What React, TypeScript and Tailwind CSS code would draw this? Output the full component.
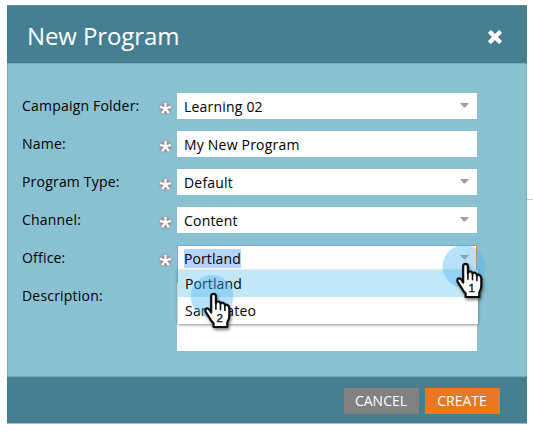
import React from "react";

const font = "font-['Open_Sans',sans-serif]";

function Asterisk() {
  return (
    <svg width="19" height="19" viewBox="-9.5 -9.5 19 19" className="overflow-visible">
      <circle r="5" fill="#c03a44" opacity="0.6" style={{ filter: "blur(1.7px)" }} />
      <path d="M0 0V-5.4M0 0L5.3-1.7M0 0L3.3 4.6M0 0L-3.3 4.6M0 0L-5.3-1.7" stroke="#fff" strokeWidth="2.3" />
    </svg>
  );
}

function Arrow({ active }: { active: boolean }) {
  return (
    <svg width="9" height="5" viewBox="0 0 9 5" className={`shrink-0 ${active ? "mt-[9px] mr-[7px]" : "mt-2.5 mr-2"}`}>
      <path d="M0 0H9L5.2 4.6H3.8Z" fill="#a0a0a0" />
    </svg>
  );
}

function Pointer({ n }: { n: string }) {
  return (
    <svg width="50" height="62" viewBox="0 0 50 62" className="overflow-visible">
      <circle cx="24" cy="26.5" r="21.4" fill="#4cb4f6" opacity="0.4" />
      <g style={{ filter: "drop-shadow(1px 2px 1.5px rgba(0,0,0,.5))" }}>
        <path
          d="M23.2 42.5V26.2Q23.2 23.8 25.5 23.8T27.9 26.2V33.2Q28.4 31.3 30.3 31.5Q32.4 31.7 32.5 33.8Q33.3 32.3 35 32.8Q36.8 33.3 36.9 35.4Q38 34.2 39.7 35.2Q41.3 36.2 41.3 38.5V46Q41.3 49 39.3 52.3V57H25.6V53.3Q23.2 51.5 21.5 47.8L17.8 42Q16.7 39.5 18.3 38.5Q20 37.7 21.6 40Z"
          fill="#fff" stroke="#0d0d0d" strokeWidth="2.2" strokeLinejoin="round"
        />
        <path d="M27.9 32V39.3M32.5 33.8V39.8M36.9 35.5V40.5" stroke="#0d0d0d" strokeWidth="1.6" fill="none" strokeLinecap="round" />
      </g>
      <text x="31.6" y="51.5" textAnchor="middle" fontSize="11.5" fill="#222" stroke="#222" strokeWidth=".4" className="tracking-normal font-['Liberation_Sans',sans-serif]">{n}</text>
    </svg>
  );
}

function Row({ label, value, arrow = true, active = false }: { label: string; value: string; arrow?: boolean; active?: boolean }) {
  return (
    <div className="flex h-[26px]">
      <div className="w-[134px] pt-[3px] leading-5">{label}</div>
      <div className="w-[21px] pt-[6px]"><Asterisk /></div>
      <div className={`flex h-[26px] w-[300px] justify-between bg-white ${active ? "border border-[#e58a35] pl-1.5" : "pl-[7px]"}`}>
        <span className={active ? "mt-[3px] h-[19px] bg-[#b3d4fb] leading-5 tracking-[0.1px]" : "pt-1 leading-5"}>{value}</span>
        {arrow && <Arrow active={active} />}
      </div>
    </div>
  );
}

export default function App() {
  return (
    <div className={`relative h-[433px] w-[533px] overflow-hidden bg-white pt-[5px] pl-[7px] text-[14px] tracking-[0.2px] text-black ${font}`}>
      <div className="flex h-[419px] w-[520px] flex-col bg-[#89c1d2]">
        <header className="flex h-[58px] items-center justify-between border-t border-[#70858b] bg-[#467f91] pr-[25px] pl-5">
          <h1 className="pt-[3px] text-[24px] leading-8 tracking-[-0.1px] text-white">New Program</h1>
          <svg width="14" height="14" viewBox="0 0 14 14" className="mt-1"><path d="M2.8 2.8L11.2 11.2M11.2 2.8L2.8 11.2" stroke="#fff" strokeWidth="4.2" strokeLinecap="square" /></svg>
        </header>
        <main className="flex h-[313px] flex-col gap-3 border-x border-t border-[#75adbe] pt-[29px] pl-[14px]">
          <Row label="Campaign Folder:" value="Learning 02" />
          <Row label="Name:" value="My New Program" arrow={false} />
          <Row label="Program Type:" value="Default" />
          <Row label="Channel:" value="Content" />
          <Row label="Office:" value="Portland" active />
          <div className="flex">
            <div className="w-[155px] pt-[3px] leading-5">Description:</div>
            <div className="h-[68px] w-[300px] bg-white" />
          </div>
        </main>
        <footer className="flex h-12 gap-1.5 border-t border-b border-t-[#72aabb] border-b-[#a4bdc5] bg-[#467f91] pt-[11px] pl-[337px] text-white">
          <button className="h-[26px] w-[75px] bg-[#818181] pr-px leading-[26px] tracking-normal">CANCEL</button>
          <button className="h-[26px] w-[75px] bg-[#e97823] pr-px leading-[26px] tracking-normal">CREATE</button>
        </footer>
      </div>
      <div className="absolute top-[199px] left-[527px] h-px w-1.5 bg-[#cfcfcf]" />
      <div className="absolute top-[270px] left-[178px] w-[300px] bg-white shadow-[0_1px_3px_rgba(0,0,0,0.45)]">
        <div className="h-[27px] bg-[#c1e8f9] pl-[7px] leading-7 tracking-[0.1px]">Portland</div>
        <div className="h-[27px] pl-[7px] leading-7">San Mateo</div>
      </div>
      <div className="absolute top-[270px] left-[188px]"><Pointer n="2" /></div>
      <div className="absolute top-[240px] left-[440px]"><Pointer n="1" /></div>
    </div>
  );
}
